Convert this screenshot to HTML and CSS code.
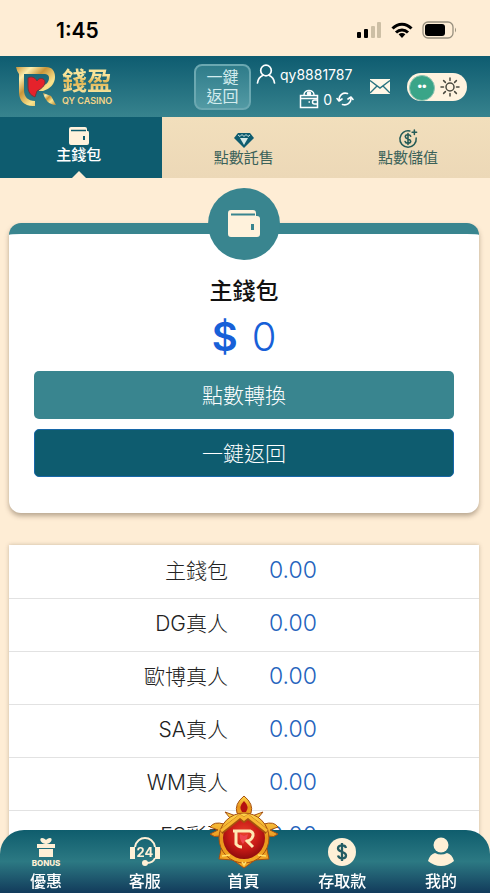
FILE: index.html
```html
<!DOCTYPE html>
<html lang="zh-Hant">
<head>
    <meta charset="UTF-8">
    <meta name="viewport" content="width=device-width, initial-scale=1.0">
    <title>錢盈 QY CASINO</title>
    <link rel="stylesheet" href="styles.css">
</head>
<body>

    <!-- Phone status bar -->
    <div class="status-bar">
        <span class="time">1:45</span>
        <div class="status-icons">
            <svg width="26" height="18" viewBox="0 0 26 18">
                <rect x="1" y="11" width="4" height="6" rx="1"/>
                <rect x="8" y="8" width="4" height="9" rx="1"/>
                <rect x="15" y="5" width="4" height="12" rx="1" fill="#cdbfa5"/>
                <rect x="21" y="1" width="4" height="16" rx="1" fill="#cdbfa5"/>
            </svg>
            <svg width="22" height="17" viewBox="0 0 22 17">
                <g fill="none" stroke="#000" stroke-width="3">
                    <path d="M1.5 6.5C7 0.8 15 0.8 20.5 6.5"/>
                    <path d="M5 10.5C8.5 7 13.5 7 17 10.5"/>
                </g>
                <path d="M7.6 12.3c2-1.800 4.800-1.800 6.800 0L11 16z"/>
            </svg>
            <svg width="36" height="18" viewBox="0 0 36 18">
                <rect x="1" y="1" width="30" height="16" rx="5" fill="none" stroke="#978f7e" stroke-width="1.3"/>
                <rect x="3" y="3" width="20" height="12" rx="3"/>
                <path d="M33 6.5q2 2.5 0 5z" fill="#978f7e"/>
            </svg>
        </div>
    </div>

    <header>
        <a class="logo" href="#">
            <svg width="42" height="42" viewBox="0 0 42 42">
                <defs>
                    <linearGradient id="gold" x1="0" y1="0" x2="1" y2="1">
                        <stop offset="0" stop-color="#c8953a"/>
                        <stop offset=".2" stop-color="#fbeeae"/>
                        <stop offset=".4" stop-color="#c8953a"/>
                        <stop offset=".65" stop-color="#fbe48d"/>
                        <stop offset="1" stop-color="#b98530"/>
                    </linearGradient>
                </defs>
                <path d="M0 1H30C36 1 39 5 39 11C39 18 34 23 27 25H23V20C29 20 33 17 33 12C33 9 31 8 28 8H8V24C8 31 12 35 19 35V40C9 41 3 35 3 26V8Q1 6 0 1z" fill="url(#gold)"/>
                <path d="M12 12C15 10 19 11 21 15C23 11 29 12 29 16C29 20 25 23 21 25L19 31C14 29 12 26 12 20z" fill="#e5222b" stroke="#73373a"/>
                <path d="M27 27L35 30L40 39C33 39 29 34 27 27z" fill="url(#gold)"/>
            </svg>
            <span class="logo-text">
                <span class="logo-name">錢盈</span>
                <span class="logo-sub">QY CASINO</span>
            </span>
        </a>

        <button class="return-btn" type="button">一鍵<br>返回</button>

        <div class="account">
            <div class="account-row">
                <svg width="20" height="20" viewBox="0 0 20 20" fill="none" stroke="#fff" stroke-width="1.7">
                    <circle cx="10" cy="6.5" r="5.3"/>
                    <path d="M1.5 19C2 14.5 4 12.5 7 11.2M18.5 19C18 14.5 16 12.5 13 11.2" stroke-linecap="round"/>
                </svg>
                <span>qy8881787</span>
            </div>
            <div class="account-row balance">
                <svg width="20" height="20" viewBox="0 0 20 20" fill="none" stroke="#fff" stroke-width="1.5">
                    <path d="M1.5 6.5H18.5V18.5H1.5zM1.5 9.5H18.5"/>
                    <path d="M5 6C5 0 15 0 15 6"/>
                    <circle cx="10" cy="4.5" r="1.5" fill="#fff"/>
                    <path d="M18.5 11H15.5a2 2 0 0 0 0 4H18.5"/>
                    <path d="M9.5 13h1.5"/>
                </svg>
                <span>0</span>
                <button class="refresh" type="button" aria-label="重新整理">
                    <svg width="18" height="16" viewBox="0 0 18 16" fill="none" stroke="#fff" stroke-width="1.6" stroke-linecap="round" stroke-linejoin="round">
                        <path d="M3 9C3 4 7 1 11.500 2.500M15 7C15 12 11 15 6.500 13.500"/>
                        <path d="M1 7.5L3 10L6 8M12 8L15 6L17 8.5"/>
                    </svg>
                </button>
            </div>
        </div>

        <a class="mail" href="#" aria-label="訊息">
            <svg width="22" height="17" viewBox="0 0 22 17">
                <rect x="1" y="1" width="20" height="15" fill="#fff8e8"/>
                <path d="M1 2.5L11 10L21 2.5M1 15L8 8M21 15L14 8" fill="none" stroke="#2a7480" stroke-width="1.4"/>
            </svg>
        </a>

        <label class="theme-switch">
            <input type="checkbox" aria-label="切換主題">
            <svg width="20" height="20" viewBox="0 0 20 20" fill="none" stroke="#4b4a40" stroke-width="1.5" stroke-linecap="round">
                <circle cx="10" cy="10" r="4"/>
                <path d="M10 1v2.5M10 16.5V19M1 10h2.5M16.5 10H19M3.6 3.6l1.8 1.8M14.6 14.6l1.8 1.8M16.4 3.6l-1.8 1.8M5.4 14.6l-1.8 1.8"/>
            </svg>
        </label>
    </header>

    <nav class="tabs">
        <a class="tab active" href="#">
            <svg width="22" height="20" viewBox="0 0 22 20">
                <path d="M3 1H17Q19 1 19 3V5H20Q21 5 21 7V17Q21 19 19 19H3Q1 19 1 17V3Q1 1 3 1z" fill="#fff2dc"/>
                <path d="M3 4.5H18" stroke="#0e5c6f" stroke-width="1.5"/>
                <path d="M16 10v4" stroke="#0e5c6f" stroke-width="2"/>
            </svg>
            <span>主錢包</span>
        </a>
        <a class="tab" href="#">
            <svg width="22" height="20" viewBox="0 0 22 20">
                <path d="M5 4H17L21 9L11 19L1 9z" fill="#0e5c6f"/>
                <path d="M7 9H15L11 16z" fill="#d5e8e5"/>
                <path d="M5 6L7 7.5L9 5.5L11 7.5L13 5.5L15 7.5L17 6" fill="none" stroke="#d5e8e5"/>
            </svg>
            <span>點數託售</span>
        </a>
        <a class="tab" href="#">
            <svg width="22" height="20" viewBox="0 0 22 22" fill="none" stroke="#245b57" stroke-width="1.7" stroke-linecap="round">
                <path d="M13 2.2A9 9 0 1 0 20 10"/>
                <path d="M14 8C13 5.5 8 6 8 8.5C8 11.5 14 10.5 14 13.5C14 16 8.5 16.5 7.8 13.8M11 5V17"/>
                <path d="M18 1v5M15.5 3.5h5"/>
            </svg>
            <span>點數儲值</span>
        </a>
    </nav>

    <main>
        <section class="wallet-card">
            <div class="wallet-badge">
                <svg width="34" height="30" viewBox="0 0 34 30">
                    <path d="M4 1H26Q29 1 29 4V7H30Q33 7 33 10V25Q33 28 30 28H4Q1 28 1 25V4Q1 1 4 1z" fill="#fff2dc"/>
                    <path d="M4 5.5H28" stroke="#39858f" stroke-width="2"/>
                    <path d="M25.5 15v6" stroke="#39858f" stroke-width="3"/>
                </svg>
            </div>
            <h1>主錢包</h1>
            <p class="amount"><strong>$</strong><span>0</span></p>
            <button class="btn" type="button">點數轉換</button>
            <button class="btn btn-dark" type="button">一鍵返回</button>
        </section>

        <table class="balances">
            <tr><th scope="row">主錢包</th><td>0.00</td></tr>
            <tr><th scope="row">DG真人</th><td>0.00</td></tr>
            <tr><th scope="row">歐博真人</th><td>0.00</td></tr>
            <tr><th scope="row">SA真人</th><td>0.00</td></tr>
            <tr><th scope="row">WM真人</th><td>0.00</td></tr>
            <tr><th scope="row">ES彩票</th><td>0.00</td></tr>
        </table>
    </main>

    <!-- Bottom menu -->
    <nav class="bottom-nav">
        <a href="#">
            <svg width="32" height="30" viewBox="0 0 32 30">
                <g fill="#fff0d6">
                    <path d="M15.5 7C10 6 9 1 12 1C14 1 15 2 16 3C17 2 18 1 20 1C23 1 22 6 16.5 7z"/>
                    <rect x="7" y="7" width="18" height="4"/>
                    <rect x="9" y="12" width="14" height="8"/>
                </g>
                <text class="bonus-text" x="16" y="29" text-anchor="middle">BONUS</text>
            </svg>
            <span>優惠</span>
        </a>
        <a href="#">
            <svg width="32" height="30" viewBox="0 0 32 30">
                <path d="M6 10C8-2 24-2 26 10M26 21Q24 26 18 26" fill="none" stroke="#fff0d6" stroke-width="2"/>
                <path d="M1 10h5v12H1zM26 10h5v12H26z" fill="#fff0d6"/>
                <circle cx="16" cy="26" r="3" fill="#fff0d6"/>
                <text class="day-text" x="16" y="20" text-anchor="middle">24</text>
            </svg>
            <span>客服</span>
        </a>
        <a class="home" href="#">
            <svg class="emblem" width="72" height="74" viewBox="0 0 72 74">
                <defs>
                    <radialGradient id="ruby" cx=".5" cy=".4" r=".6">
                        <stop offset="0" stop-color="#e8402b"/>
                        <stop offset=".6" stop-color="#c81a16"/>
                        <stop offset="1" stop-color="#8e0c0d"/>
                    </radialGradient>
                    <linearGradient id="frame" x1="0" y1="0" x2="0" y2="1">
                        <stop offset="0" stop-color="#ffd64c"/>
                        <stop offset=".5" stop-color="#e8941b"/>
                        <stop offset="1" stop-color="#f4ac25"/>
                    </linearGradient>
                </defs>
                <g fill="url(#frame)" stroke="#a65010">
                    <path d="M28 21L17 17L22 23L16 29Q6 26 2 32L10 35L2 39Q6 43 12 41L14 50L11 64L25 65L36 73L47 65L61 64L58 50L60 41Q66 43 70 39L62 35L70 32Q66 26 56 29L50 23L55 17L44 21z"/>
                    <path d="M36 1Q26 9 29 18L36 23L43 18Q46 9 36 1z"/>
                    <circle cx="36" cy="43" r="25"/>
                </g>
                <path d="M36 6Q30 12 34 17H38Q42 12 36 6z" fill="#b51010"/>
                <circle cx="36" cy="43" r="21" fill="url(#ruby)"/>
                <path d="M13 37L32 22L36 25L40 22L59 37" fill="none" stroke="#a65010" stroke-width="5"/>
                <path d="M13 36L32 21L36 24L40 21L59 36" fill="none" stroke="#f7b832" stroke-width="3"/>
                <path d="M14 61L22 60M58 61L50 60M34 67L36 70L38 67" fill="none" stroke="#ffe06c" stroke-width="1.5"/>
                <path d="M25 36H42Q47 38 44 43Q42 46 39 46L45 52M28 37V49Q30 52 34 52" fill="none" stroke="#ffe9b4" stroke-width="3"/>
                <path d="M32 39L36 41L40 39L39 43L35 49Q31 44 32 39z" fill="#ee4650"/>
            </svg>
            <span>首頁</span>
        </a>
        <a href="#">
            <svg width="32" height="30" viewBox="0 0 32 30">
                <circle cx="16" cy="15" r="14" fill="#fff0d6"/>
                <path d="M20 11C19 7 12 8 12 11.5C12 15.5 20 14 20 18.5C20 22 13 22.5 12 18.5M16 6V24" fill="none" stroke="#245c62" stroke-width="2.3"/>
            </svg>
            <span>存取款</span>
        </a>
        <a href="#">
            <svg width="32" height="30" viewBox="0 0 32 30">
                <circle cx="16" cy="8" r="7.5" fill="#fff0d6"/>
                <path d="M3 24Q5 17 10 16Q16 19 22 16Q27 17 29 24Q23 29 16 29Q9 29 3 24z" fill="#fff0d6"/>
            </svg>
            <span>我的</span>
        </a>
    </nav>

</body>
</html>
```

FILE: styles.css
```css
* {
    box-sizing: border-box;
}
body {
    font-family: Inter, 'Noto Sans CJK TC', sans-serif;
    background-color: #feedd5;
    color: #222;
    margin: 0;
    height: 100vh;
    display: flex;
    flex-direction: column;
}
a {
    color: inherit;
    text-decoration: none;
}
button {
    font-family: inherit;
    cursor: pointer;
}
svg {
    display: block;
    flex: none;
}

/* Status bar */
.status-bar {
    display: flex;
    justify-content: space-between;
    align-items: center;
    height: 56px;
    padding: 4px 32px 0 56px;
}
.time {
    color: #000;
    font-size: 21px;
    font-weight: 600;
}
.status-icons {
    display: flex;
    align-items: center;
    gap: 9px;
}

/* Header */
header {
    display: flex;
    align-items: center;
    height: 61px;
    padding: 0 23px 0 16px;
    background: linear-gradient(#0e5c70, #37838e);
    color: white;
}
.logo {
    display: flex;
    align-items: center;
    gap: 4px;
    margin-right: auto;
}
.logo-text {
    display: flex;
    flex-direction: column;
}
.logo-name {
    font-size: 25px;
    font-weight: bold;
    line-height: 28px;
    background: linear-gradient(#f9e49a 30%, #e0b450 55%, #fff0b2);
    -webkit-background-clip: text;
    background-clip: text;
    color: transparent;
}
.logo-sub {
    color: #f3d488;
    font-size: 9px;
    font-weight: 600;
    line-height: 12px;
}
.return-btn {
    width: 57px;
    height: 46px;
    margin-right: 5px;
    padding: 0;
    border: 2px solid #6ba8b1;
    border-radius: 8px;
    background: linear-gradient(#2f7c8a, #539aa4);
    color: #d3ecee;
    font-size: 16px;
    line-height: 19px;
}
.account {
    display: flex;
    flex-direction: column;
    gap: 4px;
    width: 98px;
    margin-right: 15px;
}
.account-row {
    display: flex;
    align-items: center;
    gap: 4px;
    height: 21px;
    font-size: 14px;
}
.balance {
    justify-content: flex-end;
}
.refresh {
    padding: 0;
    border: none;
    background: none;
    color: inherit;
}
.mail {
    margin-right: 16px;
}
.theme-switch {
    position: relative;
}
.theme-switch input {
    appearance: none;
    display: block;
    width: 60px;
    height: 28px;
    margin: 0;
    border-radius: 14px;
    background-color: #fff3df;
    cursor: pointer;
}
.theme-switch input::before {
    content: "••";
    display: block;
    width: 24px;
    height: 24px;
    border: 1px solid #8dc4b3;
    border-radius: 50%;
    background-color: #3aa588;
    color: white;
    font-size: 13px;
    line-height: 21px;
    text-align: center;
    position: absolute;
    top: 2px;
    left: 2px;
}
.theme-switch svg {
    position: absolute;
    top: 4px;
    right: 7px;
    pointer-events: none;
}

/* Tabs */
.tabs {
    display: grid;
    grid-template-columns: 33% 1fr 1fr;
    height: 61px;
    background: linear-gradient(#f2dfbc, #ecd8b7);
}
.tab {
    display: flex;
    flex-direction: column;
    align-items: center;
    justify-content: center;
    color: #3b6259;
    font-size: 15px;
    line-height: 18px;
}
.tab.active {
    position: relative;
    padding: 0 4px 6px 0;
    background-color: #0e5c6f;
    color: white;
    font-weight: 500;
}
.tab.active::after {
    content: "";
    position: absolute;
    bottom: 0;
    left: 50%;
    margin-left: -9px;
    border: 7px solid transparent;
    border-top: none;
    border-bottom-color: #feedd5;
}

main {
    flex: 1;
    min-height: 0;
    overflow-y: auto;
    scrollbar-width: none;
    padding: 45px 11px 72px 9px;
}

/* Main wallet */
.wallet-card {
    position: relative;
    display: flex;
    flex-direction: column;
    padding: 41px 25px 36px;
    border-top: 11px solid #39858f;
    border-radius: 12px;
    background-color: white;
    box-shadow: 0 3px 5px rgba(80, 60, 40, 0.4);
    text-align: center;
}
.wallet-badge {
    display: flex;
    align-items: center;
    justify-content: center;
    width: 72px;
    height: 72px;
    border-radius: 50%;
    background-color: #39858f;
    position: absolute;
    top: -46px;
    left: 50%;
    margin-left: -36px;
}
.wallet-card h1 {
    margin: 0;
    color: #111;
    font-size: 23px;
    font-weight: 500;
    line-height: 32px;
}
.amount {
    display: flex;
    justify-content: center;
    gap: 14px;
    margin: 6px 0 10px;
    color: #1760d8;
    font-size: 40px;
    line-height: 48px;
}
.amount strong {
    font-weight: 600;
}
.amount span {
    font-weight: 300;
}
.btn {
    height: 48px;
    padding: 0 0 2px;
    border: none;
    border-radius: 5px;
    background-color: #39858f;
    color: white;
    font-size: 21px;
    font-weight: 300;
}
.btn-dark {
    margin-top: 10px;
    border: 1px solid #1767a8;
    background-color: #0e5c6f;
}

/* Balance of each game */
.balances {
    width: 100%;
    margin-top: 32px;
    border-collapse: collapse;
    table-layout: fixed;
    background-color: white;
    box-shadow: 0 0 4px rgba(80, 60, 40, 0.3);
}
.balances tr {
    height: 53px;
    border-bottom: 1px solid #e2e2e2;
}
.balances th {
    padding: 0 16px 5px 0;
    font-size: 21px;
    font-weight: 300;
    text-align: right;
}
.balances td {
    padding: 0 0 3px 25px;
    color: #2463bd;
    font-size: 23px;
    font-weight: 300;
}

/* Bottom menu */
.bottom-nav {
    display: flex;
    justify-content: space-between;
    width: 100%;
    height: 63px;
    padding: 0 33px 0 30px;
    border-radius: 24px 24px 0 0;
    background: linear-gradient(#0f5d6d, #2c7983 50%, #123b5b);
    color: white;
    position: fixed;
    bottom: 0;
}
.bottom-nav a {
    display: flex;
    flex-direction: column;
    align-items: center;
    justify-content: flex-end;
    gap: 2px;
    width: 32px;
    position: relative;
    font-size: 16px;
    font-weight: 500;
    line-height: 24px;
    white-space: nowrap;
}
.emblem {
    position: absolute;
    bottom: 24px;
}
.bonus-text {
    fill: #fff0d6;
    font-size: 8px;
    font-weight: 800;
}
.day-text {
    fill: #fff0d6;
    font-size: 13px;
    font-weight: 700;
}
```
